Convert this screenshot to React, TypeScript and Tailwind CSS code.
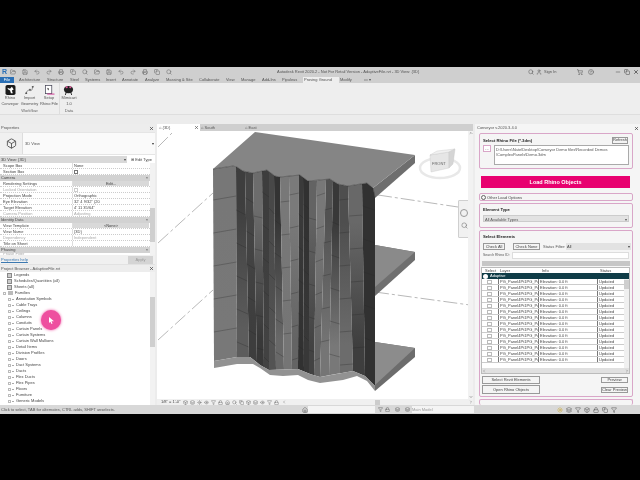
import React from "react";
import { Search, Save, FolderOpen, Undo2, Redo2, Printer, User, ShoppingCart, HelpCircle, Minus, Copy, X, Box, ChevronDown, ChevronUp, ChevronLeft, ChevronRight, Home, Lock, Filter, Eye, Sun, Layers } from "lucide-react";

const tabs: [string, string][] = [
  ["Architecture", "w-[28px]"], ["Structure", "w-[23px]"], ["Steel", "w-[15px]"], ["Systems", "w-[21px]"],
  ["Insert", "w-[16px]"], ["Annotate", "w-[23px]"], ["Analyze", "w-[21px]"], ["Massing & Site", "w-[33px]"],
  ["Collaborate", "w-[27px]"], ["View", "w-[15px]"], ["Manage", "w-[21px]"], ["Add-Ins", "w-[20px]"], ["Pipuleus", "w-[22px]"],
];

const propRows: { t: string; h?: boolean; v?: string; dim?: boolean; btn?: boolean; check?: boolean }[] = [
  { t: "Scope Box", v: "None" },
  { t: "Section Box", check: true },
  { t: "Camera", h: true },
  { t: "Rendering Settings", v: "Edit...", btn: true },
  { t: "Locked Orientation", dim: true, check: true },
  { t: "Projection Mode", v: "Orthographic" },
  { t: "Eye Elevation", v: "32' 4 9/32\" (20" },
  { t: "Target Elevation", v: "4'  11 35/64\"" },
  { t: "Camera Position", v: "Adjusting", dim: true },
  { t: "Identity Data", h: true },
  { t: "View Template", v: "<None>", btn: true },
  { t: "View Name", v: "{3D}" },
  { t: "Dependency", v: "Independent", dim: true },
  { t: "Title on Sheet", v: "" },
  { t: "Phasing", h: true },
];

const families = ["Annotation Symbols", "Cable Trays", "Ceilings", "Columns", "Conduits", "Curtain Panels", "Curtain Systems", "Curtain Wall Mullions", "Detail Items", "Division Profiles", "Doors", "Duct Systems", "Ducts", "Flex Ducts", "Flex Pipes", "Floors", "Furniture", "Generic Models"];

const topPts: [number, number][] = [[213,169],[233,166],[237,167],[243,171],[253,173],[267,170],[275,176],[280,177],[300,175],[308,181],[330,179],[338,184],[348,186],[367,183],[373,188],[375,197]];
const edgeTop: [number, number][] = [[214,361],[237,357],[250,357],[260,365],[269,370],[298,369],[310,374],[320,377],[342,373],[353,371],[365,376],[375,386]];
const edgeBot: [number, number][] = [[214,368],[237,364],[253,364],[260,368],[270,375],[283,376],[298,375],[308,380],[320,383],[343,380],[357,376],[367,381],[375,391]];

function interp(p: [number, number][], x: number) {
  for (let i = 0; i < p.length - 1; i++) {
    if (x <= p[i + 1][0]) {
      const [a, b] = p[i];
      const [c, d] = p[i + 1];
      return b + ((x - a) * (d - b)) / (c - a);
    }
  }
  return p[p.length - 1][1];
}

function between(p: [number, number][], a: number, b: number): [number, number][] {
  return p.filter(([x]) => x > a && x < b);
}

const topX = [213, 236, 245, 253, 262, 269, 274, 280, 289, 299, 303, 309, 317, 326, 333, 339, 348, 362, 375];
const botX = [214, 237, 249, 257, 264, 269, 276, 284, 292, 298, 304, 309, 314, 320, 329, 340, 353, 365, 375];
const topCol = ["#777777", "#3e3e3e", "#464646", "#6c6c6c", "#3d3d3d", "#484848", "#333333", "#787878", "#7a7a7a", "#3a3a3a", "#313131", "#636363", "#787878", "#525252", "#383838", "#4e4e4e", "#686868", "#313131"];
const botCol = ["#787878", "#5c5c5c", "#3d3d3d", "#383838", "#424242", "#535353", "#686868", "#757575", "#646464", "#313131", "#383838", "#424242", "#646464", "#757575", "#787878", "#6c6c6c", "#3e3e3e", "#313131"];
const phase = [10, 20, 8, 26, 2, 18, 30, 12, 5, 24, 14, 28, 6, 20, 32, 10, 26, 16];
const tilt = [-4, 5, 5, 2, 5, 6, 5, -1, -2, 4, 5, 2, -3, -2, 3, -1, -1, 4];

function Wall() {
  const strips = topCol.map((_, i) => {
    const a = topX[i], b = topX[i + 1], c = botX[i], d = botX[i + 1];
    const yC = interp(edgeTop, c), yD = interp(edgeTop, d);
    const outline: [number, number][] = [
      [a, interp(topPts, a)],
      ...between(topPts, a, b),
      [b, interp(topPts, b)],
      [d, yD],
      ...between(edgeTop, c, d).reverse(),
      [c, yC],
    ];
    const seams: [number, number, number, number][] = [];
    for (let k = 0; k < 6; k++) {
      const y = 190 + phase[i] + k * 33;
      if (y + Math.abs(tilt[i]) > Math.min(yC, yD) - 2) continue;
      const t = (y - 170) / 190;
      seams.push([a + (c - a) * t, y, b + (d - b) * t, y + tilt[i]]);
    }
    return { points: outline.map((p) => p.join(",")).join(" "), seams };
  });
  const band = [...edgeTop, ...[...edgeBot].reverse()].map((p) => p.join(",")).join(" ");
  const slab = [[213, 169], [255, 132], [415, 155], ...[...topPts].reverse().slice(1, -1)].map((p) => p.join(",")).join(" ");
  return (
    <svg className="absolute left-0 top-0" width="316" height="268" viewBox="157 131 316 268">
      <defs>
        {topCol.map((c, i) => (
          <linearGradient key={i} id={`s${i}`} x1="0" y1="0" x2="0" y2="1">
            <stop offset="0.2" stopColor={c} />
            <stop offset="0.85" stopColor={botCol[i]} />
          </linearGradient>
        ))}
      </defs>
      <g stroke="#888" strokeWidth="0.6" strokeDasharray="14 3 3 3" fill="none">
        <path d="M158 147L172 133" />
        <path d="M158 243L213 193" />
        <path d="M158 340L213 290" />
        <path d="M378 195L458 207" />
        <path d="M375 292L470 305" />
      </g>
      <polygon points="375,245 415,252 415,260 375,296" fill="#6f6f6f" />
      <polygon points="375,245 415,252 375,287" fill="#8a8a8a" />
      <polygon points="375,342 415,348 415,357 375,391" fill="#6c6c6c" />
      <polygon points="375,342 415,348 375,385" fill="#8c8c8c" />
      <polygon points="415,155 415,163 375,198 373,188" fill="#6e6e6e" />
      {strips.map((s, i) => <polygon key={i} points={s.points} fill={`url(#s${i})`} />)}
      <polygon points={band} fill="#929292" />
      <polygon points={slab} fill="#858585" />
      <path d={"M" + topPts.map((p) => p.join(" ")).join("L")} fill="none" stroke="#333" strokeWidth="0.5" />
      <g stroke="#282828" strokeWidth="0.5" opacity="0.6">
        {strips.map((s, i) => s.seams.map(([a, b, c, d], k) => <line key={`${i}-${k}`} x1={a} y1={b} x2={c} y2={d} />))}
      </g>
      <g>
        <ellipse cx="440" cy="168" rx="20" ry="10" fill="none" stroke="#e8e8e8" strokeWidth="2.5" />
        <polygon points="430,155 449,152 449,168 431,172" fill="#e6e6e6" stroke="#c8c8c8" strokeWidth="0.4" />
        <polygon points="430,155 437,151 455,149 449,152" fill="#f1f1f1" stroke="#c8c8c8" strokeWidth="0.4" />
        <polygon points="449,152 455,149 453,164 449,168" fill="#d5d5d5" stroke="#c8c8c8" strokeWidth="0.4" />
        <text x="432" y="165" fontSize="4" fill="#666" fontFamily="Liberation Sans">FRONT</text>
      </g>
    </svg>
  );
}

function NavBar() {
  return (
    <div className="absolute left-[301px] top-[69px] w-[12px] h-[38px] bg-[#f1f1f1] border border-[#cfcfcf] rounded-[1px] flex flex-col items-center justify-center gap-[5px]">
      <div className="w-[8px] h-[8px] rounded-full border border-[#999]" />
      <Search size={7} className="text-[#777]" />
    </div>
  );
}

function Row({ r }: { r: typeof propRows[number] }) {
  if (r.h)
    return (
      <div className="h-[6px] leading-[6px] bg-[#d2d2d2] flex justify-between px-[1px] text-[#444]">
        <span>{r.t}</span><span className="pr-[1px]">×</span>
      </div>
    );
  return (
    <div className="h-[6px] leading-[6px] flex border-b border-dotted border-[#ccc]">
      <div className={`w-[73px] pl-[3px] shrink-0 border-r border-[#ddd] ${r.dim ? "text-[#aaa]" : "text-[#444]"}`}>{r.t}</div>
      {r.btn ? (
        <div className="flex-1 bg-[#d9d9d9] text-center text-[#444] mr-[1px]">{r.v}</div>
      ) : r.check ? (
        <div className="pl-[1px]"><div className={`w-[4px] h-[4px] mt-[1px] border ${r.dim ? "border-[#ccc]" : "border-[#777]"}`} /></div>
      ) : (
        <div className={`flex-1 pl-[1px] ${r.dim ? "text-[#aaa]" : "text-[#444]"}`}>{r.v}</div>
      )}
    </div>
  );
}

function PanelTitle({ t, h }: { t: string; h: string }) {
  return (
    <div className={`flex justify-between items-center text-[#555] px-[1px] bg-[#ededed] ${h}`}>
      <span>{t}</span><X size={5} className="text-[#333]" strokeWidth={3} />
    </div>
  );
}

function Properties() {
  return (
    <div className="flex flex-col h-[140px] bg-white">
      <PanelTitle t="Properties" h="h-[8px] leading-[8px]" />
      <div className="h-[23px] flex items-center border-y border-[#e5e5e5] bg-[#fafafa]">
        <div className="w-[23px] h-full bg-[#f0f0f0] flex items-center justify-center border-r border-[#ddd]"><Box size={11} className="text-[#555]" /></div>
        <span className="ml-[2px] text-[#555] flex-1">3D View</span>
        <span className="text-[#333] pr-[1px]">▾</span>
      </div>
      <div className="h-[7px] leading-[7px] mt-[1px] flex items-center gap-[1px]">
        <div className="w-[127px] h-full bg-[#d9d9d9] pl-[1px] text-[#444] flex justify-between pr-[1px]"><span>3D View: {"{"}3D{"}"}</span><span>▾</span></div>
        <div className="flex-1 text-[#444] text-center">⊞ Edit Type</div>
      </div>
      <div className="flex flex-1 overflow-hidden">
        <div className="w-[150px] overflow-hidden">
          {propRows.map((r) => <Row key={r.t} r={r} />)}
          <div className="h-[2px] leading-[2px] overflow-hidden pl-[3px] text-[#aaa]">Phase Filter</div>
        </div>
        <div className="flex-1 relative bg-[#f2f2f2]">
          <div className="absolute top-[45px] left-0 w-full h-[34px] bg-[#cfcfcf]" />
        </div>
      </div>
      <div className="h-[9px] leading-[9px] flex justify-between items-center bg-[#f0f0f0]">
        <span className="text-[#3b78b0] pl-[1px] underline">Properties help</span>
        <div className="w-[25px] h-[8px] bg-[#d4d4d4] text-[#999] text-center leading-[8px] mr-[2px]">Apply</div>
      </div>
    </div>
  );
}

function TreeIcon() {
  return <div className="w-[3px] h-[3px] border border-[#bbb] bg-white shrink-0" />;
}

function Browser() {
  return (
    <div className="flex flex-col h-[140px] bg-white">
      <PanelTitle t="Project Browser - AdaptiveFile.rvt" h="h-[7px] leading-[7px]" />
      <div className="flex flex-1 overflow-hidden relative">
        <div className="w-[150px] overflow-hidden text-[#444]">
          {["Legends", "Schedules/Quantities (all)", "Sheets (all)"].map((t) => (
            <div key={t} className="h-[6px] leading-[6px] pl-[7px] flex items-center gap-[2px]">
              <div className="w-[5px] h-[5px] bg-[#ccc] border border-[#888]" /><span>{t}</span>
            </div>
          ))}
          <div className="h-[6px] leading-[6px] pl-[3px] flex items-center gap-[1px]">
            <TreeIcon /><div className="w-[5px] h-[4px] ml-[1px] bg-[#bbb]" /><span className="ml-[1px]">Families</span>
          </div>
          {families.map((t) => (
            <div key={t} className="h-[6px] leading-[6px] pl-[8px] flex items-center">
              <TreeIcon /><span className="w-[2px] h-[1px] bg-[#aaa] ml-[1px] mr-[2px]" /><span>{t}</span>
            </div>
          ))}
        </div>
        <div className="flex-1 relative bg-[#f2f2f2]">
          <div className="absolute top-[25px] left-0 w-full h-[50px] bg-[#cfcfcf]" />
        </div>
        <div className="absolute left-[41px] top-[38px] w-[20px] h-[20px] rounded-full bg-[#ee4f9f] shadow-[0_0_3px_#ee4f9f] flex items-center justify-center">
          <svg width="5" height="7" viewBox="0 0 5 7"><path d="M0 0v6l1.4-1.3L2.5 7l1-.5-1-2.2H5z" fill="#fff" /></svg>
        </div>
      </div>
    </div>
  );
}

function ViewTabs() {
  return (
    <div className="h-[7px] leading-[7px] flex bg-[#cfcfcf] text-[#555]">
      <div className="w-[43px] bg-white pl-[2px] flex justify-between items-center pr-[1px]"><span>⌂ {"{"}3D{"}"}</span><X size={5} strokeWidth={3} /></div>
      <div className="w-[45px] pl-[1px]">⌂ South</div>
      <div className="flex-1">⌂ East</div>
    </div>
  );
}

function Viewport() {
  const icons = [Box, Layers, Sun, Eye, Filter, Lock, Home, Search, Copy, Box, Layers, Eye, Filter, Lock];
  return (
    <div className="flex flex-col flex-1 min-w-0">
      <ViewTabs />
      <div className="flex-1 relative bg-white overflow-hidden">
        <Wall />
        <NavBar />
        <div className="absolute right-0 top-0 h-full w-[5px] bg-[#f2f2f2] flex flex-col justify-between items-center">
          <ChevronUp size={4} /><ChevronDown size={4} />
        </div>
      </div>
      <div className="h-[6px] leading-[6px] flex items-center bg-[#f0f0f0] text-[#444]">
        <span className="pl-[4px] w-[26px] whitespace-nowrap">1/8" = 1'-0"</span>
        <div className="flex gap-[2px] text-[#666]">
          {icons.map((I, i) => <I key={i} size={5} />)}
        </div>
        <ChevronLeft size={4} className="ml-[3px]" />
        <div className="w-[5px] h-[5px] bg-[#ccc] ml-[89px]" />
        <div className="flex-1" />
        <ChevronRight size={4} />
      </div>
    </div>
  );
}

function Fieldset({ className, children }: { className: string; children?: React.ReactNode }) {
  return <div className={`border border-[#d9a6c8] rounded-[2px] ${className}`}>{children}</div>;
}

function Btn({ t, className }: { t: string; className: string }) {
  return <div className={`border border-[#999] bg-[#f4f4f4] text-[#444] flex items-center justify-center whitespace-nowrap ${className}`}>{t}</div>;
}

function Conveyor() {
  const rows = Array.from({ length: 14 });
  return (
    <div className="w-[165px] shrink-0 flex flex-col bg-[#f5f5f5] pl-[4px] text-[#444]">
      <div className="h-[8px] leading-[8px] -ml-[2px] flex justify-between items-center text-[#555] pr-[1px] shrink-0">
        <span>Conveyor v.2020.3.4.0</span><X size={5} strokeWidth={3} className="text-[#333]" />
      </div>
      <Fieldset className="mt-[1px] w-[154px] h-[36px] shrink-0 px-[3px] pt-[2px]">
        <div className="flex justify-between items-center h-[8px]">
          <span className="font-bold text-[#222] leading-[7px] text-[4.2px]">Select Rhino File (*.3dm)</span>
          <Btn t="Refresh" className="w-[16px] h-[7px] mr-[1px]" />
        </div>
        <div className="flex gap-[3px] mt-[1px]">
          <div className="w-[8px] h-[7px] border border-[#d9a6c8] bg-white text-center leading-[5px]">...</div>
          <div className="flex-1 h-[20px] bg-white border border-[#aaa] px-[1px] leading-[5px] text-[#555] pt-[1px] whitespace-nowrap overflow-hidden">D:\Users\Nate\Desktop\Conveyor Demo files\Recorded Demos<br />\ComplexPanels\Demo.3dm</div>
        </div>
      </Fieldset>
      <div className="mt-[7px] ml-[2px] w-[149px] h-[12px] shrink-0 bg-[#e8006f] text-white font-bold text-center text-[5.5px] leading-[12px]">Load Rhino Objects</div>
      <Fieldset className="mt-[5px] w-[154px] h-[8px] shrink-0 flex items-center gap-[1px] pl-[1px] leading-[7px]">
        <div className="w-[5px] h-[5px] rounded-full border border-[#666]" /><span>Other Load Options</span>
      </Fieldset>
      <Fieldset className="mt-[2px] w-[154px] h-[25px] shrink-0 px-[3px] pt-[2px]">
        <div className="font-bold text-[#222] h-[7px] leading-[7px] text-[4.2px]">Element Type</div>
        <div className="mt-[2px] h-[7px] leading-[7px] bg-[#e2e2e2] border border-[#ccc] pl-[1px] flex justify-between pr-[1px] text-[#555]"><span>All Available Types</span><span>▾</span></div>
      </Fieldset>
      <Fieldset className="mt-[2px] w-[154px] h-[167px] shrink-0 px-[3px] pt-[2px]">
        <div className="font-bold text-[#222] h-[7px] leading-[7px] text-[4.2px]">Select Elements</div>
        <div className="flex items-center h-[7px] mt-[3px]">
          <Btn t="Check All" className="w-[22px] h-[7px]" />
          <Btn t="Check None" className="w-[27px] h-[7px] ml-[8px]" />
          <span className="text-[#555] ml-[3px] w-[23px]">Status Filter:</span>
          <div className="flex-1 -mr-[2px] h-[7px] leading-[7px] bg-[#e2e2e2] pl-[1px] flex justify-between pr-[1px]"><span>All</span><span>▾</span></div>
        </div>
        <div className="flex items-center h-[7px] mt-[2px]">
          <span className="text-[3.5px] text-[#555] w-[29px]">Search Rhino ID:</span>
          <div className="flex-1 h-[7px] bg-white border border-[#ddd]" />
        </div>
        <div className="h-[5px] bg-[#c6c6c6] mt-[2px] -mx-[1px]" />
        <div className="mt-[1px] -ml-[2px] w-[149px] h-[107px] bg-white border border-[#bbb] flex flex-col overflow-hidden">
          <div className="h-[5px] leading-[5px] flex text-[#444]">
            <span className="w-[17px] pl-[3px]">Select</span><span className="w-[42px] pl-[1px]">Layer</span><span className="w-[58px] pl-[1px]">Info</span><span className="pl-[1px]">Status</span>
          </div>
          <div className="h-[6px] leading-[6px] bg-[#0f3c47] text-white flex items-center pl-[1px] gap-[2px]">
            <div className="w-[5px] h-[5px] rounded-full bg-white" /><span>Adaptive</span>
          </div>
          <div className="flex-1 flex min-h-0">
            <div className="flex-1 flex flex-col">
              {rows.map((_, i) => (
                <div key={i} className="h-[6px] leading-[5px] flex border-b border-[#ccc] text-[#444] shrink-0">
                  <div className="w-[17px] pl-[5px] border-r border-[#777] shrink-0"><div className="w-[5px] h-[4px] border border-[#bbb] mt-[0.5px]" /></div>
                  <div className="w-[40px] pl-[1px] border-r border-[#777] shrink-0 overflow-hidden whitespace-nowrap">PG_Panel4Pt1PG_Pa</div>
                  <div className="w-[59px] pl-[1px] border-r border-[#777] shrink-0">Elevation: 0.0 ft</div>
                  <div className="pl-[1px]">Updated</div>
                </div>
              ))}
            </div>
            <div className="w-[5px] bg-[#f0f0f0] relative"><div className="absolute top-[1px] left-0 w-full h-[9px] bg-[#cfcfcf]" /></div>
          </div>
          <div className="h-[5px] bg-[#e0e0e0] flex justify-between items-center shrink-0"><ChevronLeft size={4} /><ChevronRight size={4} /></div>
        </div>
        <div className="flex justify-between mt-[2px] -ml-[1px]">
          <div className="flex flex-col gap-[1px]">
            <Btn t="Select Revit Elements" className="w-[58px] h-[8px]" />
            <Btn t="Open Rhino Objects" className="w-[58px] h-[9px]" />
          </div>
          <div className="flex flex-col gap-[4px] pt-[1px] mr-[1px]">
            <Btn t="Preview" className="w-[27px] h-[6px]" />
            <Btn t="Clear Preview" className="w-[27px] h-[6px]" />
          </div>
        </div>
      </Fieldset>
      <Fieldset className="mt-[2px] w-[154px] flex-1 border-b-0" />
    </div>
  );
}

function Ribbon() {
  return (
    <div className="h-[32px] bg-[#eeeeee] flex text-[#555] text-center border-b border-[#dedede]">
      <div className="flex flex-col w-[60px] border-r border-[#ddd]">
        <div className="flex h-[24px]">
          <div className="w-[20px] flex flex-col items-center pt-[2px]">
            <svg width="11" height="11" viewBox="0 0 11 11"><rect width="11" height="11" rx="2" fill="#1c1c1c" /><path d="M2 3l3 1 2-2 2 3-2 1 1 3-2 0-1-3-2-1z" fill="#fff" /></svg>
            <span className="leading-[6px] whitespace-nowrap">Rhino<br />Conveyor</span>
          </div>
          <div className="w-[19px] flex flex-col items-center pt-[2px]">
            <svg width="11" height="11" viewBox="0 0 11 11" fill="none"><path d="M1 10C3 7 3 5 6 6S8 3 10 1" stroke="#666" strokeWidth="0.8" /><circle cx="2" cy="9" r="1" fill="#555" /><circle cx="6" cy="5" r="1" fill="#555" /><circle cx="9" cy="2" r="1" fill="#555" /></svg>
            <span className="leading-[6px] whitespace-nowrap">Import<br />Geometry</span>
          </div>
          <div className="w-[20px] flex flex-col items-center pt-[2px]">
            <svg width="11" height="11" viewBox="0 0 11 11" fill="none"><rect x="1" y="0.5" width="7" height="9" fill="#fff" stroke="#445" strokeWidth="0.8" /><path d="M3 3l2 1-1 2z" fill="#222" /><path d="M3 10h8" stroke="#d0308f" strokeWidth="1" /></svg>
            <span className="leading-[6px] whitespace-nowrap">Setup<br />Rhino File</span>
          </div>
        </div>
        <div className="h-[7px] leading-[8px] text-[#666]">Workflow</div>
      </div>
      <div className="flex flex-col w-[18px] items-center">
        <div className="h-[24px] flex flex-col items-center pt-[2px]">
          <svg width="11" height="11" viewBox="0 0 11 11"><ellipse cx="5.5" cy="5" rx="5" ry="4" fill="#222" /><circle cx="3.5" cy="2.5" r="1.2" fill="#e05a9c" /><circle cx="7.5" cy="2.5" r="1.2" fill="#e05a9c" /><path d="M3 8l-1 3M8 8l1 3" stroke="#222" /></svg>
          <span className="leading-[6px] whitespace-nowrap">Mimicart<br />1.0</span>
        </div>
        <div className="h-[7px] leading-[8px] text-[#666]">Data</div>
      </div>
    </div>
  );
}

export default function App() {
  const qat = [FolderOpen, Save, Undo2, Redo2, Printer, Copy, Search];
  return (
    <div className="w-[640px] h-[480px] bg-black pt-[67px] pb-[66px] overflow-hidden font-['Liberation_Sans',sans-serif] text-[4px] blur-[0.25px]">
      <div className="h-[347px] flex flex-col bg-[#ececec]">
        <div className="h-[10px] bg-[#cfcfcf] flex items-center text-[#555] shrink-0">
          <span className="pl-[2px] w-[10px] font-bold text-[#2a6fb5] text-[7px] leading-[10px]">R</span>
          <div className="flex gap-[6px] text-[#666] w-[162px] shrink-0">
            {qat.map((I, i) => <I key={i} size={6} className="shrink-0" />)}
            {qat.map((I, i) => <I key={"b" + i} size={6} className="shrink-0" />)}
          </div>
          <span className="ml-[105px] w-[142px] shrink-0 whitespace-nowrap">Autodesk Revit 2020.2 - Not For Retail Version - AdaptiveFile.rvt - 3D View: {"{"}3D{"}"}</span>
          <div className="flex items-center gap-[2px] ml-[109px]">
            <Search size={6} /><User size={6} /><span className="w-[30px]">Sign In</span>
            <ShoppingCart size={6} className="ml-[1px]" /><HelpCircle size={6} className="ml-[3px]" />
          </div>
          <div className="flex items-center gap-[3px] ml-auto pr-[1px] text-[#444]">
            <Minus size={6} /><Copy size={6} /><X size={6} strokeWidth={3} />
          </div>
        </div>
        <div className="h-[6px] bg-[#cfcfcf] flex leading-[6px] text-[#555] shrink-0">
          <div className="w-[14px] bg-[#2a6fb5] text-white text-center mr-[5px]">File</div>
          {tabs.map(([t, w]) => <div key={t} className={`${w} whitespace-nowrap`}>{t}</div>)}
          <div className="w-[36px] -ml-[1px] pl-[1px] bg-[#eeeeee] whitespace-nowrap">Proving Ground</div>
          <div className="w-[25px] pl-[1px]">Modify</div>
          <div className="w-[12px]">▭ ▾</div>
        </div>
        <Ribbon />
        <div className="h-[9px] bg-[#ececec] shrink-0" />
        <div className="flex-1 flex min-h-0">
          <div className="w-[155px] shrink-0 flex flex-col gap-[1px] bg-[#e2e2e2]">
            <Properties />
            <Browser />
          </div>
          <div className="flex-1 flex min-w-0 pl-[2px] pr-[2px]">
            <Viewport />
          </div>
          <Conveyor />
        </div>
        <div className="h-[9px] leading-[9px] bg-[#d8d8d8] flex items-center text-[#555] shrink-0">
          <span className="pl-[1px] w-[302px] shrink-0">Click to select, TAB for alternates, CTRL adds, SHIFT unselects.</span>
          <Home size={6} />
          <div className="w-[67px] h-[7px] bg-[#f4f4f4]" />
          <Filter size={5} className="ml-[3px]" /><Lock size={5} className="ml-[2px]" />
          <Layers size={5} className="ml-[5px]" /><Layers size={5} className="ml-[5px]" />
          <div className="w-[62px] h-[7px] leading-[7px] bg-[#f4f4f4] ml-[2px] text-[#999]">Main Model</div>
          <div className="flex gap-[3px] ml-[83px]">
            <Sun size={6} className="text-[#c9a227]" /><Layers size={6} /><Filter size={6} /><Box size={6} /><Lock size={6} /><Copy size={6} /><Filter size={6} />
          </div>
        </div>
      </div>
    </div>
  );
}
